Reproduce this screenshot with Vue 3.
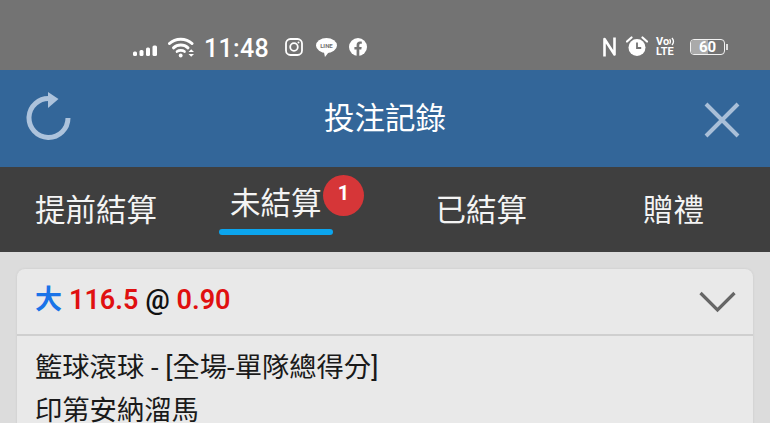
<script setup>
const tabs = [
  { label: '提前結算', cls: 'tab-early' },
  { label: '未結算', cls: 'tab-open', active: true, badge: 1 },
  { label: '已結算', cls: 'tab-done' },
  { label: '贈禮', cls: 'tab-gift' },
];
</script>

<template>
  <div class="screen">
    <div class="status">
      <div class="status-left">
        <svg class="signal" width="26" height="12" viewBox="0 0 26 12">
          <rect x="0" y="7.500" width="4" height="4.500" rx="1.500" fill="#fff" />
          <rect x="6.500" y="6" width="4" height="6" rx="1.500" fill="#fff" />
          <rect x="13" y="3.500" width="4" height="8.500" rx="1.500" fill="#fff" />
          <rect x="19.500" y="1.500" width="4.500" height="10.500" rx="1.500" fill="#fff" />
        </svg>
        <svg class="wifi" width="27" height="21" viewBox="0 0 27 21" fill="none" stroke="#fff" stroke-linecap="round">
          <path d="M1.500 6.500C7.500 0.800 18 0.800 24 6.500" stroke-width="3" />
          <path d="M5.500 10.800C9.500 7 16 7 20 10.800" stroke-width="3" />
          <path d="M9 14.600C11 13 14.500 13 16.500 14.600" stroke-width="2.600" />
          <circle cx="12.700" cy="18.500" r="1.900" fill="#fff" stroke="none" />
          <path d="M20.500 15l2.700-2.800L26 15zM20.500 17l2.700 2.800L26 17z" fill="#fff" stroke="none" />
        </svg>
        <span class="time">11:48</span>
        <svg class="ig" width="18" height="18" viewBox="0 0 18 18" fill="none" stroke="#fff" stroke-width="1.800">
          <rect x="1" y="1" width="16" height="16" rx="4.500" />
          <circle cx="9" cy="9" r="3.800" />
          <circle cx="13.500" cy="4.500" r="1" fill="#fff" stroke="none" />
        </svg>
        <span class="line-icon"><span class="line-text">LINE</span></span>
        <svg class="fb" width="18" height="18" viewBox="0 0 18 18">
          <circle cx="9" cy="9" r="9" fill="#fff" />
          <path d="M7.600 18v-6.600H5.400V9h2.200V7.100c0-2.300 1.300-3.500 3.400-3.500.9 0 1.800.1 1.800.1v2.100h-1.100c-1 0-1.400.7-1.400 1.400V9h2.400l-.4 2.400h-2V18z" fill="#737373" />
        </svg>
      </div>
      <div class="status-right">
        <svg class="nfc" width="15" height="22" viewBox="0 0 15 22" fill="none" stroke="#fff" stroke-width="2.600" stroke-linejoin="round">
          <path d="M2.500 20.500V3l10 15.500V1.500" />
        </svg>
        <svg class="alarm" width="22" height="21" viewBox="0 0 22 21">
          <circle cx="11" cy="11.500" r="8.500" fill="#fff" />
          <path d="M11 6.500v5.500h4.200" fill="none" stroke="#737373" stroke-width="1.800" />
          <path d="M1 5.500L5.500 1.500M21 5.500L16.500 1.500" stroke="#fff" stroke-width="2.200" stroke-linecap="round" />
        </svg>
        <div class="volte">
          <span class="vo">Vo<svg width="6" height="9" viewBox="0 0 6 9" fill="none" stroke="#fff" stroke-width="1.300"><path d="M.6 2.200c1 1.400 1 3.200 0 4.600M3 1c1.700 2 1.700 5 0 7" /></svg></span>
          <span class="lte">LTE</span>
        </div>
        <div class="battery">
          <div class="battery-body">
            <div class="battery-fill"></div>
            <span class="battery-num">60</span>
          </div>
          <div class="battery-cap"></div>
        </div>
      </div>
    </div>

    <header class="topbar">
      <svg class="refresh" width="46" height="50" viewBox="0 0 46 50" fill="none">
        <path d="M24 8.500A19.500 19.500 0 1 0 42 28" stroke="#adc3dc" stroke-width="5" />
        <path d="M22 2L32.500 9 22 18z" fill="#adc3dc" />
      </svg>
      <h1 class="title">投注記錄</h1>
      <svg class="close" width="38" height="38" viewBox="0 0 38 38" stroke="#a9bfd8" stroke-width="4">
        <path d="M3 3l32 32M35 3L3 35" />
      </svg>
    </header>

    <nav class="tabs">
      <div v-for="tab in tabs" :key="tab.label" class="tab" :class="[tab.cls, { active: tab.active }]">
        {{ tab.label }}
        <span v-if="tab.badge" class="badge">{{ tab.badge }}</span>
      </div>
    </nav>

    <main class="content">
      <section class="card">
        <div class="card-head">
          <div class="bet">
            <span class="blue">大</span>
            <span class="red">116.5</span>
            <span class="black">@</span>
            <span class="red">0.90</span>
          </div>
          <svg class="chevron" width="37" height="22" viewBox="0 0 37 22" fill="none" stroke="#666" stroke-width="3.200">
            <path d="M1.500 2l17 17 17-17" />
          </svg>
        </div>
        <div class="card-body">
          <div class="row">籃球滾球 - [全場-單隊總得分]</div>
          <div class="row">印第安納溜馬</div>
        </div>
      </section>
    </main>
  </div>
</template>

<style scoped>
.screen {
  width: 770px;
  height: 423px;
  overflow: hidden;
  display: flex;
  flex-direction: column;
  background: #dcdcdc;
  font-family: Roboto, "Noto Sans CJK TC", sans-serif;
}

.status {
  height: 70px;
  flex: none;
  background: #737373;
  color: #fff;
  display: flex;
  justify-content: space-between;
  align-items: center;
  padding: 27px 42px 0 133px;
  box-sizing: border-box;
}
.status-left,
.status-right {
  display: flex;
  align-items: center;
}
.signal { margin-right: 9px; margin-top: 3px; }
.wifi { margin-right: 9px; margin-top: -3px; }
.time {
  font-size: 25px;
  font-weight: 500;
  line-height: 30px;
  letter-spacing: 0.3px;
  margin-right: 16px;
}
.ig { margin-right: 13px; margin-top: -3px; }
.line-icon {
  position: relative;
  width: 21px;
  height: 15px;
  border-radius: 50%;
  background: #fff;
  margin-right: 12px;
  margin-top: -6px;
  display: flex;
  align-items: center;
  justify-content: center;
}
.line-icon::after {
  content: "";
  position: absolute;
  left: 8px;
  bottom: -4px;
  width: 5px;
  height: 5px;
  background: #fff;
  clip-path: polygon(0 0, 100% 0, 20% 100%);
}
.line-text {
  font-size: 6px;
  font-weight: 700;
  line-height: 1;
  color: #737373;
}
.fb { margin-top: -3px; }

.nfc { margin-right: 9px; margin-top: -4px; }
.alarm { margin-right: 8px; margin-top: -4px; }
.volte {
  width: 19px;
  margin-right: 15px;
  margin-top: -4px;
  display: flex;
  flex-direction: column;
  align-items: flex-start;
  font-weight: 700;
}
.vo {
  font-size: 11px;
  line-height: 9px;
  height: 9px;
  margin-bottom: 2px;
  display: flex;
  align-items: center;
}
.lte { font-size: 11px; line-height: 8px; height: 8px; }
.battery { display: flex; align-items: center; margin-top: -4px; }
.battery-body {
  position: relative;
  width: 33px;
  height: 14px;
  border: 1.500px solid #f2f2f2;
  border-radius: 4px;
  box-sizing: content-box;
  overflow: hidden;
}
.battery-fill {
  width: 50%;
  height: 100%;
  background: #aaa;
}
.battery-num {
  position: absolute;
  left: 8px;
  top: 0;
  font-size: 15px;
  line-height: 15px;
  font-weight: 700;
}
.battery-cap {
  width: 2px;
  height: 6px;
  background: #ddd;
  margin-left: 1px;
}

.topbar {
  height: 97px;
  flex: none;
  background: #336699;
  display: flex;
  align-items: center;
  justify-content: space-between;
  padding: 0 29px 0 26px;
  box-sizing: border-box;
}
.refresh { margin-top: -7px; }
.title {
  margin: 0 5px 0 0;
  font-size: 30.500px;
  font-weight: 400;
  color: #fff;
  line-height: 40px;
}
.close { margin-top: 3px; }

.tabs {
  height: 85px;
  flex: none;
  background: #3f3f3f;
  display: flex;
  align-items: center;
  padding: 2px 0 0 35px;
  box-sizing: border-box;
  color: #f4f4f4;
  font-size: 30.500px;
}
.tab {
  position: relative;
  line-height: 40px;
  white-space: nowrap;
}
.tab-open { margin-left: 73px; }
.tab-done { margin-left: 114px; }
.tab-gift { margin-left: 116px; }
.tab.active { margin-top: -13px; }
.tab.active::after {
  content: "";
  position: absolute;
  left: -11px;
  right: -11px;
  top: 45px;
  height: 6px;
  border-radius: 3px;
  background: #0ba5ee;
}
.badge {
  position: absolute;
  left: 93px;
  top: -9px;
  width: 41px;
  height: 41px;
  border-radius: 50%;
  background: #d63638;
  color: #fff;
  font-size: 20px;
  font-weight: 700;
  line-height: 37px;
  text-align: center;
}

.content {
  flex: 1;
  padding: 17px 17px 0;
}
.card {
  background: #e9e9e9;
  border-radius: 8px 8px 0 0;
  box-shadow: 0 0 3px rgba(0, 0, 0, 0.08);
}
.card-head {
  height: 65px;
  display: flex;
  align-items: center;
  justify-content: space-between;
  padding: 0 17px 0 18px;
  border-bottom: 2px solid #cfcfcf;
}
.bet {
  display: flex;
  gap: 7px;
  font-size: 27px;
  font-weight: 600;
  line-height: 36px;
  margin-top: -4px;
}
.blue { color: #1a73e8; }
.red { color: #e01010; }
.black { color: #111; }
.card-body {
  padding: 11px 18px 0;
  color: #1a1a1a;
  font-size: 27.300px;
  line-height: 42.500px;
}
.row {
  white-space: nowrap;
}
</style>
